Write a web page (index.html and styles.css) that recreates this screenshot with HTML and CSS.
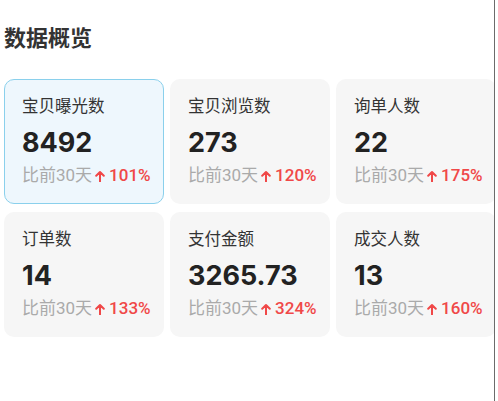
FILE: index.html
```html
<!DOCTYPE html>
<html lang="zh-CN">

<head>
    <meta charset="UTF-8">
    <meta name="viewport" content="width=device-width, initial-scale=1.0">
    <title>数据概览</title>
    <link rel="stylesheet" href="styles.css">
</head>

<body>
    <div class="page">
        <h1 class="title">数据概览</h1>

        <div class="stats">
            <div class="card active">
                <div class="label">宝贝曝光数</div>
                <div class="value">8492</div>
                <div class="compare">比前30天<svg class="arrow" viewBox="0 0 10 12"><path d="M5 11.5V2M1.2 5.8L5 2l3.8 3.8" /></svg><span class="rise">101%</span></div>
            </div>
            <div class="card">
                <div class="label">宝贝浏览数</div>
                <div class="value">273</div>
                <div class="compare">比前30天<svg class="arrow" viewBox="0 0 10 12"><path d="M5 11.5V2M1.2 5.8L5 2l3.8 3.8" /></svg><span class="rise">120%</span></div>
            </div>
            <div class="card">
                <div class="label">询单人数</div>
                <div class="value">22</div>
                <div class="compare">比前30天<svg class="arrow" viewBox="0 0 10 12"><path d="M5 11.5V2M1.2 5.8L5 2l3.8 3.8" /></svg><span class="rise">175%</span></div>
            </div>
            <div class="card">
                <div class="label">订单数</div>
                <div class="value">14</div>
                <div class="compare">比前30天<svg class="arrow" viewBox="0 0 10 12"><path d="M5 11.5V2M1.2 5.8L5 2l3.8 3.8" /></svg><span class="rise">133%</span></div>
            </div>
            <div class="card">
                <div class="label">支付金额</div>
                <div class="value">3265.73</div>
                <div class="compare">比前30天<svg class="arrow" viewBox="0 0 10 12"><path d="M5 11.5V2M1.2 5.8L5 2l3.8 3.8" /></svg><span class="rise">324%</span></div>
            </div>
            <div class="card">
                <div class="label">成交人数</div>
                <div class="value">13</div>
                <div class="compare">比前30天<svg class="arrow" viewBox="0 0 10 12"><path d="M5 11.5V2M1.2 5.8L5 2l3.8 3.8" /></svg><span class="rise">160%</span></div>
            </div>
        </div>
    </div>
</body>

</html>
```

FILE: styles.css
```css
body {
    font-family: Roboto, "Noto Sans CJK SC", sans-serif;
    background-color: #fff;
    margin: 0;
}

.page {
    width: 495px;
    min-height: 100vh;
    box-sizing: border-box;
    padding: 24px 0 0 4px;
    border-right: 1px solid #6b6b6b;
    overflow: hidden;
}

.title {
    margin: 0 0 25px;
    font-size: 22px;
    line-height: 30px;
    font-weight: bold;
    color: #333;
}

.stats {
    display: grid;
    grid-template-columns: 160px 160px 160px;
    gap: 8px 6px;
}

.card {
    height: 125px;
    box-sizing: border-box;
    padding: 15px 17px 0;
    background: #f6f6f6;
    border: 1.5px solid transparent;
    border-radius: 10px;
}

.card.active {
    background: #eef7fd;
    border-color: #8ad0ec;
}

.label {
    font-size: 16.5px;
    line-height: 24px;
    color: #333;
}

.value {
    margin-top: 7px;
    font-family: Inter, sans-serif;
    font-size: 27px;
    line-height: 34px;
    font-weight: 700;
    color: #222;
}

.compare {
    margin-top: 4px;
    font-size: 17px;
    line-height: 23px;
    color: #aaa;
    white-space: nowrap;
}

.rise {
    color: #f04848;
    font-weight: 500;
}

.arrow {
    width: 10px;
    height: 12px;
    margin: 0 4px 0 3px;
    vertical-align: -1px;
    fill: none;
    stroke: #f04848;
    stroke-width: 2;
    stroke-linecap: round;
    stroke-linejoin: round;
}
```
